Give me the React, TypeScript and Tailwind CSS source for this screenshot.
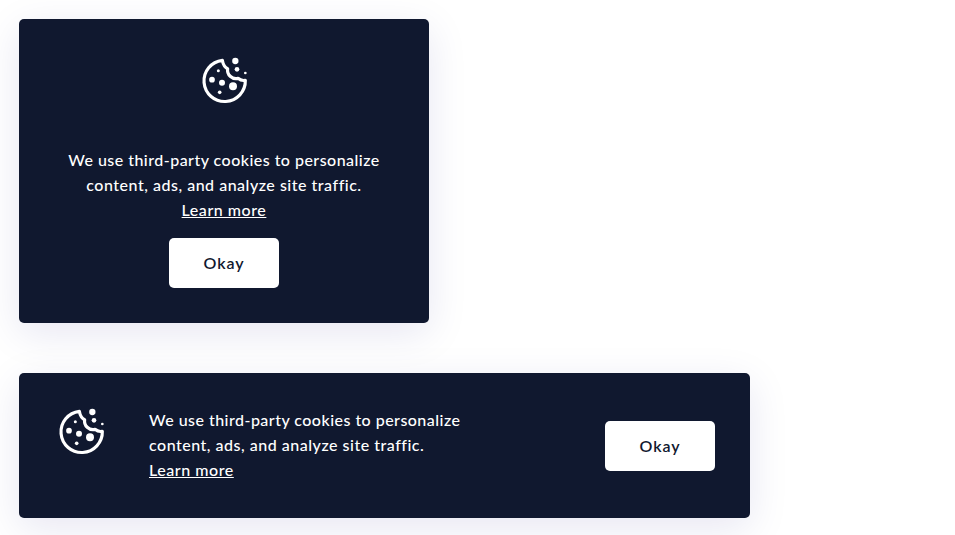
function Cookie() {
  return (
    <svg width="60" height="60" viewBox="0 0 180 180" fill="none" className="block shrink-0" aria-hidden="true">
      <path
        d="M82 31 A62 62 0 1 0 151 91 C142 93 135 90 129 85 C111 89 95 74 98 56 C88 52 84 42 82 31 Z"
        stroke="white"
        strokeWidth="9.5"
        strokeLinejoin="round"
      />
      <g fill="white">
        <circle cx="70" cy="62" r="4.5" />
        <circle cx="51" cy="89" r="8.5" />
        <circle cx="81" cy="98" r="9" />
        <circle cx="114" cy="109" r="12" />
        <circle cx="74" cy="127" r="5.5" />
        <circle cx="121" cy="33" r="9.5" />
        <circle cx="126" cy="58" r="7" />
        <circle cx="151" cy="69" r="4" />
      </g>
    </svg>
  );
}

function Message() {
  return (
    <p className="whitespace-nowrap text-[16px] leading-[25px] font-medium text-white">
      <span className="tracking-[0.47px]">We use third-party cookies to personalize</span>
      <br />
      <span className="tracking-[0.51px]">content, ads, and analyze site traffic.</span>
      <br />
      <a className="tracking-[0.54px] underline decoration-1 underline-offset-1">Learn more</a>
    </p>
  );
}

function Okay() {
  return (
    <button className="h-[50px] w-[110px] shrink-0 rounded-[5px] bg-white text-[16px] font-semibold tracking-[0.9px] text-[#10182f]">
      Okay
    </button>
  );
}

export default function App() {
  return (
    <main className="flex h-[535px] flex-col items-start gap-[50px] overflow-hidden bg-white pt-[19px] pl-[19px] font-['Lato','Noto_Sans',sans-serif]">
      <section className="flex h-[304px] w-[410px] shrink-0 flex-col items-center rounded-[5px] bg-[#10182f] pt-[31px] text-center shadow-[0_10px_40px_rgba(22,8,130,0.1)]">
        <div className="pl-px">
          <Cookie />
        </div>
        <div className="mt-[37px] mb-[16px]">
          <Message />
        </div>
        <Okay />
      </section>
      <section className="flex h-[145px] w-[731px] shrink-0 items-start rounded-[5px] bg-[#10182f] pt-[28px] pr-[35px] pl-[33px] shadow-[0_10px_40px_rgba(22,8,130,0.1)]">
        <Cookie />
        <div className="mt-[6px] ml-[37px] flex-1">
          <Message />
        </div>
        <div className="mt-[20px]">
          <Okay />
        </div>
      </section>
    </main>
  );
}
